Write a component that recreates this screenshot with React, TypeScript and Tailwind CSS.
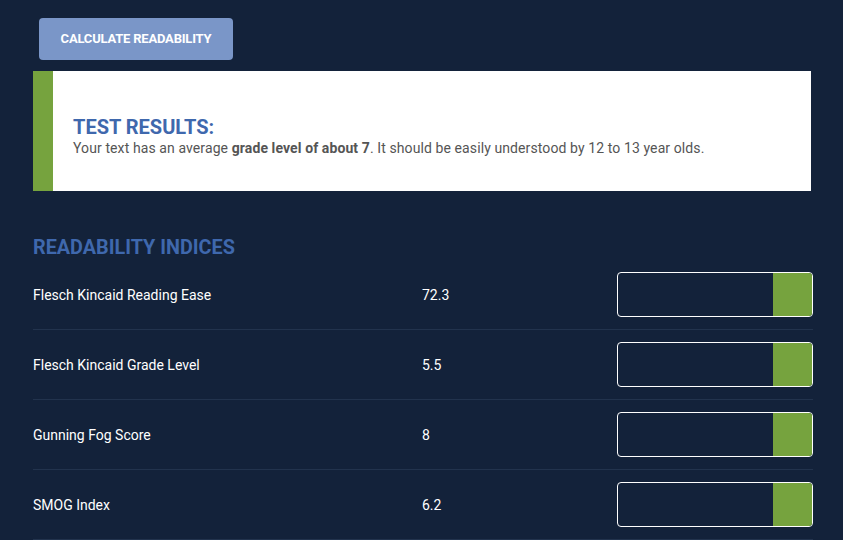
import React from "react";

const rows = [
  { label: "Flesch Kincaid Reading Ease", value: "72.3" },
  { label: "Flesch Kincaid Grade Level", value: "5.5" },
  { label: "Gunning Fog Score", value: "8" },
  { label: "SMOG Index", value: "6.2" },
];

export default function App() {
  return (
    <div className="w-[843px] h-[540px] overflow-hidden bg-[#13223a] font-['Roboto',sans-serif]">
      <div className="pl-[33px] pr-[30px] pt-[18px]">
        <button className="ml-[6px] w-[194px] h-[42px] rounded-[4px] bg-[#7a96c8] text-white text-[13px] font-bold tracking-[-0.2px] uppercase">
          Calculate Readability
        </button>
        <div className="mt-[11px] w-[778px] h-[120px] flex bg-white">
          <div className="w-[20px] bg-[#76a33e]" />
          <div className="pl-[20px] pt-[44px]">
            <div className="text-[20px] leading-[24px] font-bold text-[#3f68ad] uppercase">Test Results:</div>
            <div className="text-[14px] leading-[18px] tracking-[0.1px] text-[#555555]">
              Your text has an average <span className="font-bold">grade level of about 7</span>. It should be easily understood by 12 to 13 year olds.
            </div>
          </div>
        </div>
        <div className="mt-[45px] text-[19.8px] leading-[24px] font-bold text-[#3f68ad] uppercase">Readability Indices</div>
        <div>
          {rows.map((r) => (
            <div key={r.label} className="grid grid-cols-[389px_195px_196px] items-center h-[70px] border-b border-[#22334d] w-[780px]">
              <div className="text-[14px] leading-[20px] pt-[1px] text-white">{r.label}</div>
              <div className="text-[14px] leading-[20px] pt-[1px] text-white">{r.value}</div>
              <div className="h-[45px] rounded-[4px] border border-white flex justify-end overflow-hidden">
                <div className="w-[39px] bg-[#76a33e]" />
              </div>
            </div>
          ))}
        </div>
      </div>
    </div>
  );
}
